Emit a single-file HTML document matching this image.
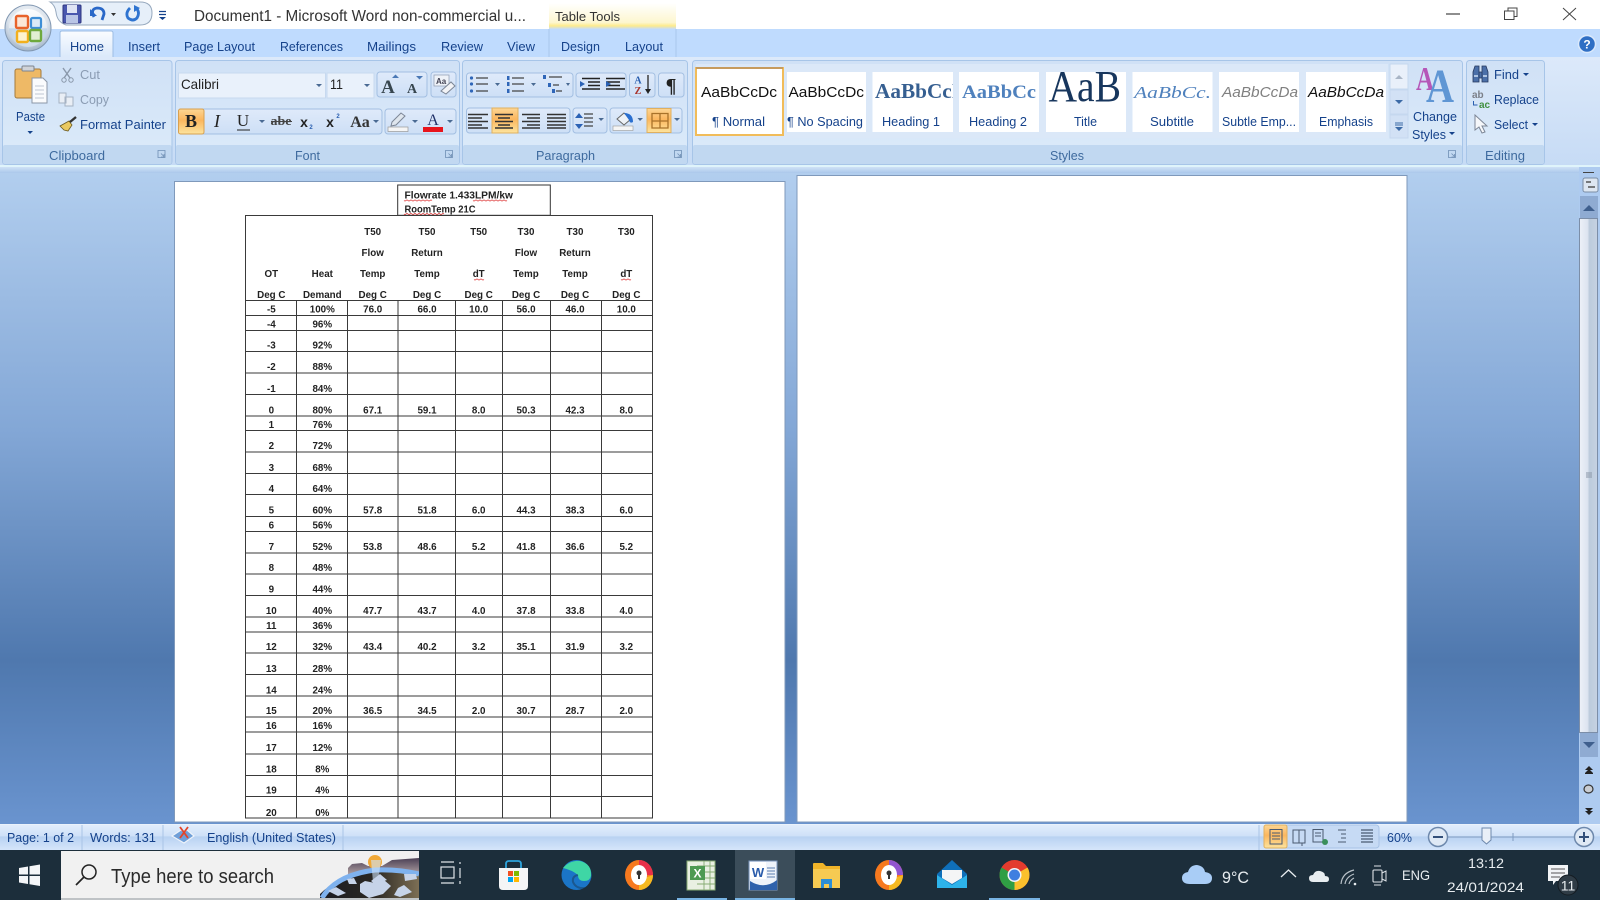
<!DOCTYPE html>
<html lang="en"><head><meta charset="utf-8"><title>Document1 - Microsoft Word</title>
<style>
html,body{margin:0;padding:0;background:#fff;width:1600px;height:900px;overflow:hidden}
svg{display:block;font-family:"Liberation Sans",sans-serif;filter:blur(.35px)}
.t{fill:#15428b;font-size:13px}
.g{fill:#3e6a9e;font-size:13px}
.s{fill:#15428b;font-size:13px}
.tb{font-weight:bold;font-size:9.8px;fill:#222;text-anchor:middle}
.w{fill:#e8edf0}
.sq{fill:none;stroke:#d33;stroke-width:.7}
</style></head><body>
<svg width="1600" height="900" viewBox="0 0 1600 900" xmlns="http://www.w3.org/2000/svg">
<defs>
<linearGradient id="bg" x1="0" y1="167" x2="0" y2="825" gradientUnits="userSpaceOnUse"><stop offset="0" stop-color="#b3cfef"/><stop offset=".4" stop-color="#83a7d6"/><stop offset=".75" stop-color="#4f78ae"/><stop offset="1" stop-color="#6a94cf"/></linearGradient>
<linearGradient id="rib" x1="0" y1="0" x2="0" y2="1"><stop offset="0" stop-color="#dce9fa"/><stop offset="1" stop-color="#c6dbf5"/></linearGradient>
<linearGradient id="grp" x1="0" y1="0" x2="0" y2="1"><stop offset="0" stop-color="#d0e1f6"/><stop offset="1" stop-color="#dcebfa"/></linearGradient>
<linearGradient id="tab" x1="0" y1="0" x2="0" y2="1"><stop offset="0" stop-color="#fafcff"/><stop offset="1" stop-color="#d9e8fa"/></linearGradient>
<linearGradient id="yel" x1="0" y1="0" x2="0" y2="1"><stop offset="0" stop-color="#fff"/><stop offset=".75" stop-color="#fdf6cf"/><stop offset=".88" stop-color="#fdeb8c"/><stop offset="1" stop-color="#c6dcf8"/></linearGradient>
<linearGradient id="act" x1="0" y1="0" x2="0" y2="1"><stop offset="0" stop-color="#fdd694"/><stop offset=".45" stop-color="#fbb65e"/><stop offset="1" stop-color="#fde49e"/></linearGradient>
<linearGradient id="btn" x1="0" y1="0" x2="0" y2="1"><stop offset="0" stop-color="#dfeafa"/><stop offset="1" stop-color="#cddff6"/></linearGradient>
<linearGradient id="st" x1="0" y1="0" x2="0" y2="1"><stop offset="0" stop-color="#e3eefc"/><stop offset=".45" stop-color="#cfe1f8"/><stop offset=".5" stop-color="#b9d2f2"/><stop offset="1" stop-color="#d5e5fa"/></linearGradient>
<linearGradient id="under" x1="0" y1="0" x2="0" y2="1"><stop offset="0" stop-color="#d6e6f8"/><stop offset="1" stop-color="#aac7ea"/></linearGradient>
<linearGradient id="thumb" x1="0" y1="0" x2="1" y2="0"><stop offset="0" stop-color="#edf1f8"/><stop offset=".45" stop-color="#dde4f0"/><stop offset=".55" stop-color="#bccbdc"/><stop offset="1" stop-color="#c6d2e2"/></linearGradient>
<radialGradient id="orb" cx=".5" cy=".35" r=".7"><stop offset="0" stop-color="#fbfcfd"/><stop offset=".6" stop-color="#dbe3ec"/><stop offset="1" stop-color="#93a8c0"/></radialGradient>
<linearGradient id="orbl" x1="0" y1="0" x2="0" y2="1"><stop offset="0" stop-color="#fff" stop-opacity=".9"/><stop offset=".5" stop-color="#eef3f7" stop-opacity=".5"/><stop offset=".52" stop-color="#a9c8e4" stop-opacity=".5"/><stop offset="1" stop-color="#e2ecf4" stop-opacity=".6"/></linearGradient>
<linearGradient id="sky" x1="0" y1="0" x2="0" y2="1"><stop offset="0" stop-color="#4a3f55"/><stop offset="1" stop-color="#b9a9a8"/></linearGradient>
<linearGradient id="arc" x1="0" y1="0" x2="1" y2="0"><stop offset="0" stop-color="#1c1c22"/><stop offset=".55" stop-color="#2a2722"/><stop offset="1" stop-color="#7d6f55"/></linearGradient>
<clipPath id="cH1"><rect x="873" y="72" width="80" height="60"/></clipPath>
<clipPath id="cSearch"><rect x="320" y="851" width="99" height="47"/></clipPath>
</defs>

<!-- title bar -->
<rect width="1600" height="29" fill="#fff"/>
<rect x="0" y="29" width="1600" height="28" fill="#bfdbfe"/>
<rect x="549" y="3" width="127" height="26" fill="url(#yel)"/>
<path d="M549 29V57M676 29V57" stroke="#a9c7ec"/>
<text x="194" y="21" textLength="332" lengthAdjust="spacingAndGlyphs" font-size="15.5" fill="#333">Document1 - Microsoft Word non-commercial u...</text>
<text x="555" y="21" textLength="65" lengthAdjust="spacingAndGlyphs" font-size="13" fill="#333">Table Tools</text>
<!-- window controls -->
<path d="M1446 14H1460" stroke="#444" stroke-width="1.2"/>
<path d="M1504.5 11H1514V19.5H1504.5ZM1508 11V8H1517V16.5H1514" fill="none" stroke="#444" stroke-width="1"/>
<path d="M1563 8L1576 20M1576 8L1563 20" stroke="#444" stroke-width="1"/>

<!-- QAT -->
<path d="M50 2H140Q152 2 152 13Q152 25 140 25H66Q57 22 56 12Q55 5 50 2Z" fill="#e6eff9" stroke="#97a9be"/>
<rect x="63" y="5" width="18" height="18" rx="1" fill="#4957ae" stroke="#2e3680"/>
<rect x="67" y="5" width="10" height="8" fill="#dfe4f4"/><rect x="66" y="15" width="12" height="8" fill="#b9c5e6"/>
<path d="M94 17Q90 9 97 8Q104 8 104 14L102 20" fill="none" stroke="#2a68c8" stroke-width="2.8"/><path d="M90 9V16H97Z" fill="#2a68c8"/>
<path d="M111 13H116L113.500 16Z" fill="#333"/>
<path d="M130 8Q125 13 128 18Q133 22 137 18Q140 13 137 9" fill="none" stroke="#2f74d0" stroke-width="2.8"/><path d="M134 5V12L140 8Z" fill="#2f74d0"/>
<path d="M159 11.500H166M159 14.500H166" stroke="#15428b" stroke-width="1.300"/><path d="M159 17H166L162.500 20Z" fill="#15428b"/>

<!-- office orb -->
<circle cx="28" cy="28" r="23" fill="url(#orb)" stroke="#8298b2"/>
<circle cx="28" cy="28" r="19" fill="url(#orbl)"/>
<rect x="16" y="16" width="12" height="12" rx="1.500" fill="#fbe7d8" stroke="#e8632b" stroke-width="2.400"/>
<rect x="31" y="18" width="10" height="10" rx="1.500" fill="#dbeaf6" stroke="#3f8fd6" stroke-width="2.200"/>
<rect x="17" y="31" width="11" height="11" rx="1.500" fill="#fdf3d0" stroke="#f2b01e" stroke-width="2.400"/>
<rect x="30" y="30" width="11" height="11" rx="1.500" fill="#e2efd4" stroke="#6ea93d" stroke-width="2.400"/>

<!-- tabs -->
<path d="M60 58V33Q60 31 62 31H111Q113 31 113 33V58Z" fill="url(#tab)" stroke="#9dbde4"/>
<text class="t" y="51" x="70" textLength="34" lengthAdjust="spacingAndGlyphs">Home</text>
<text class="t" y="51" x="128" textLength="32" lengthAdjust="spacingAndGlyphs">Insert</text>
<text class="t" y="51" x="184" textLength="71" lengthAdjust="spacingAndGlyphs">Page Layout</text>
<text class="t" y="51" x="280" textLength="63" lengthAdjust="spacingAndGlyphs">References</text>
<text class="t" y="51" x="367" textLength="49" lengthAdjust="spacingAndGlyphs">Mailings</text>
<text class="t" y="51" x="441" textLength="42" lengthAdjust="spacingAndGlyphs">Review</text>
<text class="t" y="51" x="507" textLength="28" lengthAdjust="spacingAndGlyphs">View</text>
<text class="t" y="51" x="561" textLength="39" lengthAdjust="spacingAndGlyphs">Design</text>
<text class="t" y="51" x="625" textLength="38" lengthAdjust="spacingAndGlyphs">Layout</text>
<circle cx="1587" cy="44" r="8.500" fill="#2f6fc4" stroke="#dbe9fb" stroke-width="1.500"/>
<text x="1587" y="48.500" text-anchor="middle" font-size="12" font-weight="bold" fill="#fff">?</text>

<!-- ribbon -->
<rect x="0" y="57" width="1600" height="110" fill="url(#rib)"/>
<rect x="61" y="56" width="51" height="3" fill="#dce9fa"/>
<rect x="0" y="165" width="1600" height="2" fill="#dff4fb"/>
<!-- groups -->
<g fill="url(#grp)" stroke="#a7c5e8">
<rect x="2.500" y="60.500" width="169.500" height="104" rx="3"/>
<rect x="175.500" y="60.500" width="284" height="104" rx="3"/>
<rect x="462.500" y="60.500" width="225" height="104" rx="3"/>
<rect x="692.500" y="60.500" width="770" height="104" rx="3"/>
<rect x="1466.500" y="60.500" width="78" height="104" rx="3"/>
</g>
<g fill="#c1d8f1">
<rect x="3" y="145" width="168.500" height="19" rx="2"/>
<rect x="176" y="145" width="283" height="19" rx="2"/>
<rect x="463" y="145" width="224" height="19" rx="2"/>
<rect x="693" y="145" width="769" height="19" rx="2"/>
<rect x="1467" y="145" width="77" height="19" rx="2"/>
</g>
<text class="g" x="49" y="160" textLength="56" lengthAdjust="spacingAndGlyphs">Clipboard</text>
<text class="g" x="295" y="160" textLength="25" lengthAdjust="spacingAndGlyphs">Font</text>
<text class="g" x="536" y="160" textLength="59" lengthAdjust="spacingAndGlyphs">Paragraph</text>
<text class="g" x="1050" y="160" textLength="34" lengthAdjust="spacingAndGlyphs">Styles</text>
<text class="g" x="1485" y="160" textLength="40" lengthAdjust="spacingAndGlyphs">Editing</text>
<g fill="none" stroke="#6f8fb5" stroke-width=".8">
<path d="M158 150.500h7v7h-7zM161 153.500l3 3M164 154v3h-3"/>
<path d="M445.500 150.500h7v7h-7zM448.500 153.500l3 3M451.500 154v3h-3"/>
<path d="M674.500 150.500h7v7h-7zM677.500 153.500l3 3M680.500 154v3h-3"/>
<path d="M1448.500 150.500h7v7h-7zM1451.500 153.500l3 3M1454.500 154v3h-3"/>
</g>

<!-- Clipboard -->
<rect x="15" y="69" width="26" height="29" rx="2" fill="#eeb966" stroke="#a47a3c"/>
<rect x="22" y="66" width="12" height="5" rx="1" fill="#d0d3d8" stroke="#7d8490"/>
<path d="M32 78H43L47 82V103H32Z" fill="#fafbfd" stroke="#8c97a8"/>
<path d="M35 86H44M35 90H44M35 94H44M35 98H44" stroke="#c0c7d2"/>
<text class="s" x="16" y="121" textLength="29" lengthAdjust="spacingAndGlyphs">Paste</text>
<path d="M27.500 131H33L30 134Z" fill="#15428b"/>
<path d="M63 68L70 78M71 68L64 78" stroke="#8a98aa" stroke-width="1.400"/><circle cx="64" cy="80" r="2.200" fill="none" stroke="#8a98aa"/><circle cx="71" cy="80" r="2.200" fill="none" stroke="#8a98aa"/>
<text x="80" y="79" textLength="20" lengthAdjust="spacingAndGlyphs" font-size="13" fill="#8b9cb3">Cut</text>
<path d="M59 93H66V103H59ZM65 97H73V106H65Z" fill="#e9eef5" stroke="#a5b2c3"/>
<text x="80" y="104" textLength="29" lengthAdjust="spacingAndGlyphs" font-size="13" fill="#8b9cb3">Copy</text>
<path d="M69 121L60 126L64 130L68 131L72 125Z" fill="#e9c961" stroke="#6b5a20" stroke-width=".8"/><path d="M70 122L76 117" stroke="#333" stroke-width="2.400"/>
<text class="s" x="80" y="129" textLength="86" lengthAdjust="spacingAndGlyphs">Format Painter</text>

<!-- Font -->
<rect x="178.500" y="73" width="147" height="25" fill="#e9f1fb" stroke="#c7d9ef"/>
<rect x="327" y="73" width="47" height="25" fill="#e9f1fb" stroke="#c7d9ef"/>
<text x="181" y="89" textLength="38" lengthAdjust="spacingAndGlyphs" font-size="14" fill="#222">Calibri</text>
<text x="330" y="89" textLength="13" lengthAdjust="spacingAndGlyphs" font-size="14" fill="#222">11</text>
<path d="M316 84H322L319 87ZM364 84H370L367 87Z" fill="#4a6a93"/>
<g fill="url(#btn)" stroke="#a3bfe2">
<rect x="377" y="72" width="50" height="25" rx="3"/><rect x="431" y="72" width="25" height="25" rx="3"/>
<rect x="178.500" y="109" width="203.500" height="25" rx="3"/><rect x="385" y="109" width="71" height="25" rx="3"/>
<rect x="466.500" y="73" width="106.500" height="24" rx="3"/><rect x="576" y="73" width="50" height="24" rx="3"/>
<rect x="629.500" y="73" width="25.500" height="24" rx="3"/><rect x="658.500" y="73" width="25.500" height="24" rx="3"/>
<rect x="466.500" y="108" width="103.500" height="25" rx="3"/><rect x="573" y="108" width="34" height="25" rx="3"/>
<rect x="610" y="108" width="72" height="25" rx="3"/>
</g>
<text x="388" y="93" font-family="Liberation Serif" font-size="19" font-weight="bold" fill="#37464f" text-anchor="middle">A</text>
<path d="M392 78h7l-3.500-3.500z" fill="#4a78b5"/>
<text x="412" y="93" font-family="Liberation Serif" font-size="14" font-weight="bold" fill="#37464f" text-anchor="middle">A</text>
<path d="M416 76h7l-3.500 3.500z" fill="#4a78b5"/>
<rect x="434" y="75" width="15" height="11" fill="#eef2f8" stroke="#8d9bb0" stroke-width=".7"/>
<text x="436" y="84" font-size="8" font-weight="bold" fill="#445">Aa</text>
<path d="M441 91L451 82L455 86L446 94Z" fill="#f2f3f6" stroke="#7c8696"/>
<rect x="178.500" y="109" width="25.500" height="25" rx="2" fill="url(#act)" stroke="#d8a050"/>
<text x="191" y="127" text-anchor="middle" font-family="Liberation Serif" font-size="18" font-weight="bold" fill="#222">B</text>
<text x="217" y="127" text-anchor="middle" font-family="Liberation Serif" font-size="18" font-style="italic" fill="#222">I</text>
<text x="243" y="126" text-anchor="middle" font-family="Liberation Serif" font-size="17" fill="#222">U</text>
<path d="M237 130H250" stroke="#222"/>
<path d="M259 120H265L262 123Z" fill="#4a6a93"/>
<text x="281" y="125" text-anchor="middle" font-family="Liberation Serif" font-size="13" font-weight="bold" fill="#444" textLength="21" lengthAdjust="spacingAndGlyphs">abe</text>
<path d="M271 121.500H292" stroke="#444"/>
<text x="304" y="127" text-anchor="middle" font-size="14" font-weight="bold" fill="#222">x</text><text x="311" y="129" text-anchor="middle" font-size="6" font-weight="bold" fill="#2a5fb0">2</text>
<text x="330" y="127" text-anchor="middle" font-size="14" font-weight="bold" fill="#222">x</text><text x="338" y="118" text-anchor="middle" font-size="6" font-weight="bold" fill="#2a5fb0">2</text>
<text x="360" y="127" text-anchor="middle" font-family="Liberation Serif" font-size="16" font-weight="bold" fill="#333">Aa</text>
<path d="M373 120H379L376 123Z" fill="#4a6a93"/>
<path d="M392 122L401 113L405 116L396 125L391 126Z" fill="#dfe6ee" stroke="#7c8696"/>
<rect x="388" y="127" width="20" height="4.500" fill="#f5f5f5" stroke="#999" stroke-width=".7"/>
<path d="M412 120H418L415 123Z" fill="#4a6a93"/>
<text x="433" y="125" text-anchor="middle" font-family="Liberation Serif" font-size="16" fill="#22336a">A</text>
<rect x="423" y="127" width="20" height="5" fill="#e8141c"/>
<path d="M447 120H453L450 123Z" fill="#4a6a93"/>

<!-- Paragraph row 1 -->
<g stroke="#444" stroke-width="1.200" fill="none">
<path d="M476 78H488M476 84H488M476 91H488"/>
<path d="M512 78H524M512 84H524M512 91H524"/>
<path d="M549 77H562M553 85H559M556 91H562"/>
</g>
<g stroke="#222" stroke-width="1.600" fill="none">
<path d="M582 78.500H600M588 82H600M588 85.500H600M582 89H600"/>
<path d="M606 78.500H625M606 82H620M606 85.500H620M606 89H625"/>
</g>
<path d="M648 75V90" stroke="#333" stroke-width="1.400"/>
<path d="M585 84L580 81V87ZM611 84L606 81V87Z" fill="#2b62b5"/>
<g fill="#2f66b8"><circle cx="471.500" cy="78" r="1.600"/><circle cx="471.500" cy="84" r="1.600"/><circle cx="471.500" cy="91" r="1.600"/><rect x="507" y="76" width="2.500" height="4"/><rect x="507" y="82" width="2.500" height="4"/><rect x="507" y="89" width="2.500" height="4"/><rect x="543" y="75" width="3" height="4"/><rect x="548" y="83" width="3" height="4"/><rect x="552" y="89" width="3" height="4"/></g>
<path d="M495 83H500L497.500 86ZM531 83H536L533.500 86ZM566 83H570L568 86Z" fill="#4a6a93"/>
<path d="M645 89H651L648 94Z" fill="#222"/>
<text x="638" y="83.500" text-anchor="middle" font-family="Liberation Serif" font-size="10" font-weight="bold" fill="#2a5fb0">A</text>
<text x="638" y="94" text-anchor="middle" font-family="Liberation Serif" font-size="10" font-weight="bold" fill="#a8342c">Z</text>
<text x="671" y="92" text-anchor="middle" font-family="Liberation Serif" font-size="20" font-weight="bold" fill="#222">¶</text>
<!-- Paragraph row 2 -->
<rect x="492" y="108" width="26" height="25" fill="url(#act)" stroke="#e0b060"/>
<rect x="647" y="108.500" width="24" height="24" fill="url(#act)" stroke="#e0b060"/>
<g stroke="#333" stroke-width="1.500" fill="none">
<path d="M468 114.500H488M468 118H482M468 121.500H488M468 125H482M468 128H488"/>
<path d="M495 114.500H513M498 118H510M495 121.500H513M498 125H510M495 128H513"/>
<path d="M522 114.500H540M527 118H540M522 121.500H540M527 125H540M522 128H540"/>
<path d="M547 114.500H566M547 118H566M547 121.500H566M547 125H566M547 128H566"/>
</g>
<path d="M584 114H593M584 118H593M584 122H593M584 126H593" stroke="#444" stroke-width="1.200"/>
<path d="M579 113L583 118H575ZM579 129L583 124H575Z" fill="#2b62b5"/>
<path d="M598.500 118H604L601 121Z" fill="#4a6a93"/>
<path d="M617 119L624 113L631 119L624 125Z" fill="#eef2f7" stroke="#666"/><path d="M624 113Q633 113 633 122Q630 124 629 120Z" fill="#2a6fd0"/>
<rect x="613" y="126" width="20" height="4.500" fill="#f5f5f5" stroke="#999" stroke-width=".6"/>
<path d="M637.500 118H643L640 121Z" fill="#4a6a93"/>
<path d="M652 113.500H668V128H652ZM660 113.500V128M652 121H668" fill="none" stroke="#a8722a" stroke-width="1.300"/>
<path d="M674 118H680L677 121Z" fill="#4a6a93"/>

<!-- Styles -->
<rect x="696" y="64" width="692" height="74" fill="#dbe8f8"/>
<rect x="696" y="68" width="87" height="67" fill="#fff" stroke="#f1bc5a" stroke-width="2"/>
<path d="M696 68H783" stroke="#b89060" stroke-width="1.500"/>
<g fill="#fff">
<rect x="787" y="72" width="79" height="60"/><rect x="872.500" y="72" width="80.500" height="60"/><rect x="959" y="72" width="80" height="60"/>
<rect x="1046" y="72" width="80" height="60"/><rect x="1132.500" y="72" width="80" height="60"/><rect x="1219" y="72" width="80" height="60"/><rect x="1306" y="72" width="80" height="60"/>
</g>
<text x="701" y="97" textLength="76" lengthAdjust="spacingAndGlyphs" font-size="15" fill="#111">AaBbCcDc</text>
<text x="788.500" y="97" textLength="75.500" lengthAdjust="spacingAndGlyphs" font-size="15" fill="#111">AaBbCcDc</text>
<g clip-path="url(#cH1)"><text x="875" y="98" textLength="85" lengthAdjust="spacingAndGlyphs" font-family="Liberation Serif" font-size="21" font-weight="bold" fill="#365f91">AaBbCcI</text></g>
<text x="962" y="98" textLength="74" lengthAdjust="spacingAndGlyphs" font-family="Liberation Serif" font-size="19" font-weight="bold" fill="#4f81bd">AaBbCc</text>
<text x="1048.500" y="101" textLength="72.500" lengthAdjust="spacingAndGlyphs" font-family="Liberation Serif" font-size="44" fill="#17365d">AaB</text>
<text x="1134" y="98" textLength="77" lengthAdjust="spacingAndGlyphs" font-family="Liberation Serif" font-size="17" font-style="italic" fill="#4f81bd">AaBbCc.</text>
<text x="1222" y="97" textLength="76" lengthAdjust="spacingAndGlyphs" font-size="15" font-style="italic" fill="#808080">AaBbCcDa</text>
<text x="1308" y="97" textLength="76" lengthAdjust="spacingAndGlyphs" font-size="15" font-style="italic" fill="#111">AaBbCcDa</text>
<g font-size="13" fill="#15428b">
<text x="712" y="126" textLength="53" lengthAdjust="spacingAndGlyphs">¶ Normal</text>
<text x="787" y="126" textLength="76" lengthAdjust="spacingAndGlyphs">¶ No Spacing</text>
<text x="882" y="126" textLength="58" lengthAdjust="spacingAndGlyphs">Heading 1</text>
<text x="969" y="126" textLength="58" lengthAdjust="spacingAndGlyphs">Heading 2</text>
<text x="1074" y="126" textLength="23" lengthAdjust="spacingAndGlyphs">Title</text>
<text x="1150" y="126" textLength="44" lengthAdjust="spacingAndGlyphs">Subtitle</text>
<text x="1222" y="126" textLength="74" lengthAdjust="spacingAndGlyphs">Subtle Emp...</text>
<text x="1319" y="126" textLength="54" lengthAdjust="spacingAndGlyphs">Emphasis</text>
</g>
<rect x="1390" y="64" width="18" height="25" fill="#e9f0fa" stroke="#c5d8ef"/>
<rect x="1390" y="90" width="18" height="24" fill="#d2e1f5" stroke="#c5d8ef"/>
<rect x="1390" y="115" width="18" height="23" fill="#d2e1f5" stroke="#c5d8ef"/>
<path d="M1395 79H1403L1399 75Z" fill="#a9b5c6"/><path d="M1395 100H1403L1399 104Z" fill="#3c6aa6"/>
<path d="M1395 123H1403M1395 125H1403" stroke="#3c6aa6"/><path d="M1395 127H1403L1399 131Z" fill="#3c6aa6"/>
<text x="1416" y="90" font-family="Liberation Serif" font-size="34" font-weight="bold" fill="#b556b8" textLength="18" lengthAdjust="spacingAndGlyphs">A</text>
<text x="1426" y="102" font-family="Liberation Serif" font-size="48" font-weight="bold" fill="#5f96d4" textLength="28" lengthAdjust="spacingAndGlyphs">A</text>
<text class="s" x="1413" y="121" textLength="44" lengthAdjust="spacingAndGlyphs">Change</text>
<text class="s" x="1412" y="139" textLength="34" lengthAdjust="spacingAndGlyphs">Styles</text>
<path d="M1449 132H1455L1452 135Z" fill="#15428b"/>

<!-- Editing -->
<path d="M1473 82V72L1475 66H1479V82ZM1482 82V66H1486L1488 72V82ZM1479 72H1482V78H1479Z" fill="#4a6fa8" stroke="#26395e" stroke-width=".8"/>
<path d="M1474 76H1478M1483 76H1487" stroke="#cfe0f5" stroke-width="1.500"/>
<text class="s" x="1494" y="79" textLength="25" lengthAdjust="spacingAndGlyphs">Find</text>
<path d="M1523 73H1529L1526 76Z" fill="#15428b"/>
<text x="1472" y="98" font-size="10" fill="#7b7f88" font-weight="bold">ab</text><text x="1479" y="108" font-size="10" fill="#3f8f3f" font-weight="bold">ac</text>
<path d="M1473.500 101v4h4" stroke="#2a5fb0" fill="none"/>
<text class="s" x="1494" y="104" textLength="45" lengthAdjust="spacingAndGlyphs">Replace</text>
<path d="M1475 115V130L1479 127L1482 133L1485 132L1482 126H1487Z" fill="#f5f7fa" stroke="#7c8696"/>
<text class="s" x="1494" y="129" textLength="34" lengthAdjust="spacingAndGlyphs">Select</text>
<path d="M1532 123H1538L1535 126Z" fill="#15428b"/>

<!-- workspace -->
<rect x="0" y="167" width="1600" height="658" fill="url(#bg)"/>
<rect x="0" y="167" width="1600" height="6" fill="url(#under)" opacity=".8"/>
<rect x="174.500" y="181.500" width="610.500" height="640.500" fill="#fff" stroke="#7f99bb"/>
<rect x="797" y="175.500" width="610" height="646.500" fill="#fff" stroke="#7f99bb"/>

<!-- scrollbar -->
<rect x="1579" y="167" width="21" height="658" fill="#aecbf0"/>
<path d="M1583 172.500H1594" stroke="#444"/>
<rect x="1583" y="178" width="15" height="14" rx="2" fill="#dde6f1" stroke="#7c8ea5"/><path d="M1586 182h5M1588 187h7" stroke="#555" stroke-width="1.400"/>
<rect x="1580" y="196" width="18" height="22" fill="#8fabd2"/>
<path d="M1583 211H1595L1589 205Z" fill="#3f5f8d"/>
<rect x="1579.500" y="218.500" width="18" height="514" fill="url(#thumb)" stroke="#7c8ea8"/>
<path d="M1586 473h6M1586 475h6M1586 477h6" stroke="#8a96a6"/>
<rect x="1580" y="733" width="18" height="24" fill="#8fabd2"/>
<path d="M1583 742H1595L1589 748Z" fill="#3f5f8d"/>
<path d="M1585 770L1589 766L1593 770ZM1585 773L1589 769L1593 773ZM1585 773H1593V774H1585Z" fill="#222"/>
<ellipse cx="1588.500" cy="789" rx="4.500" ry="4" fill="#c8ccd2" stroke="#333" stroke-width="1.200"/>
<path d="M1585 808L1589 812L1593 808ZM1585 811L1589 815L1593 811Z" fill="#222"/>

<!-- Page content -->
<rect x="397.700" y="185" width="152.600" height="30.300" fill="#fff" stroke="#333"/>
<text x="404.500" y="198.500" font-size="10" font-weight="bold" fill="#222" textLength="108.500" lengthAdjust="spacingAndGlyphs">Flowrate 1.433LPM/kw</text>
<text x="404.500" y="212.500" font-size="10" font-weight="bold" fill="#222" textLength="71" lengthAdjust="spacingAndGlyphs">RoomTemp 21C</text>
<path class="sq" d="M404 200.500q1 1 2 0t2 0 2 0 2 0 2 0 2 0 2 0 2 0 2 0 2 0 2 0 2 0 2 0 2 0M473 200.500q1 1 2 0t2 0 2 0 2 0 2 0 2 0 2 0 2 0 2 0 2 0 2 0 2 0 2 0 2 0 2 0 2 0 2 0M404 214q1 1 2 0t2 0 2 0 2 0 2 0 2 0 2 0 2 0 2 0 2 0 2 0 2 0 2 0 2 0 2 0 2 0 2 0 2 0 2 0 2 0M474 279.500q1 1 2 0t2 0 2 0 2 0 2 0M621 279.500q1 1 2 0t2 0 2 0 2 0 2 0"/>
<!-- table grid -->
<g stroke="#3a3a3a" stroke-width="1.100" fill="none" shape-rendering="crispEdges">
<rect x="245.500" y="215.500" width="407" height="602.500"/>
<path d="M245 300.500H652M245 315.500H652M245 330.500H652M245 351.500H652M245 373H652M245 394.500H652M245 416H652M245 430.500H652M245 452H652M245 473.500H652M245 494.500H652M245 516.500H652M245 531.500H652M245 553H652M245 574H652M245 595.500H652M245 617H652M245 632H652M245 653H652M245 674.500H652M245 696H652M245 717H652M245 732H652M245 754H652M245 775.500H652M245 796.500H652"/>
<path d="M296.500 300V818M347.500 300V818M398 300V818M455.500 300V818M502.500 300V818M550.500 300V818M601.500 300V818"/>
</g>
<!-- header -->
<g>
<text class="tb" x="372.700" y="235">T50</text><text class="tb" x="427" y="235">T50</text><text class="tb" x="478.700" y="235">T50</text><text class="tb" x="526" y="235">T30</text><text class="tb" x="575" y="235">T30</text><text class="tb" x="626.300" y="235">T30</text>
<text class="tb" x="372.700" y="256">Flow</text><text class="tb" x="427" y="256">Return</text><text class="tb" x="526" y="256">Flow</text><text class="tb" x="575" y="256">Return</text>
<text class="tb" x="271.300" y="277">OT</text><text class="tb" x="322.300" y="277">Heat</text><text class="tb" x="372.700" y="277">Temp</text><text class="tb" x="427" y="277">Temp</text><text class="tb" x="478.700" y="277">dT</text><text class="tb" x="526" y="277">Temp</text><text class="tb" x="575" y="277">Temp</text><text class="tb" x="626.300" y="277">dT</text>
<text class="tb" x="271.300" y="298">Deg C</text><text class="tb" x="322.300" y="298">Demand</text><text class="tb" x="372.700" y="298">Deg C</text><text class="tb" x="427" y="298">Deg C</text><text class="tb" x="478.700" y="298">Deg C</text><text class="tb" x="526" y="298">Deg C</text><text class="tb" x="575" y="298">Deg C</text><text class="tb" x="626.300" y="298">Deg C</text>
</g>
<!-- rows -->
<text class="tb" x="271.300" y="312.500">-5</text><text class="tb" x="322.300" y="312.500">100%</text><text class="tb" x="372.700" y="312.500">76.0</text><text class="tb" x="427" y="312.500">66.0</text><text class="tb" x="478.700" y="312.500">10.0</text><text class="tb" x="526" y="312.500">56.0</text><text class="tb" x="575" y="312.500">46.0</text><text class="tb" x="626.300" y="312.500">10.0</text>
<text class="tb" x="271.300" y="327.500">-4</text><text class="tb" x="322.300" y="327.500">96%</text>
<text class="tb" x="271.300" y="348.500">-3</text><text class="tb" x="322.300" y="348.500">92%</text>
<text class="tb" x="271.300" y="370">-2</text><text class="tb" x="322.300" y="370">88%</text>
<text class="tb" x="271.300" y="392">-1</text><text class="tb" x="322.300" y="392">84%</text>
<text class="tb" x="271.300" y="413.500">0</text><text class="tb" x="322.300" y="413.500">80%</text><text class="tb" x="372.700" y="413.500">67.1</text><text class="tb" x="427" y="413.500">59.1</text><text class="tb" x="478.700" y="413.500">8.0</text><text class="tb" x="526" y="413.500">50.3</text><text class="tb" x="575" y="413.500">42.3</text><text class="tb" x="626.300" y="413.500">8.0</text>
<text class="tb" x="271.300" y="428">1</text><text class="tb" x="322.300" y="428">76%</text>
<text class="tb" x="271.300" y="449">2</text><text class="tb" x="322.300" y="449">72%</text>
<text class="tb" x="271.300" y="471">3</text><text class="tb" x="322.300" y="471">68%</text>
<text class="tb" x="271.300" y="492">4</text><text class="tb" x="322.300" y="492">64%</text>
<text class="tb" x="271.300" y="513.500">5</text><text class="tb" x="322.300" y="513.500">60%</text><text class="tb" x="372.700" y="513.500">57.8</text><text class="tb" x="427" y="513.500">51.8</text><text class="tb" x="478.700" y="513.500">6.0</text><text class="tb" x="526" y="513.500">44.3</text><text class="tb" x="575" y="513.500">38.3</text><text class="tb" x="626.300" y="513.500">6.0</text>
<text class="tb" x="271.300" y="528.500">6</text><text class="tb" x="322.300" y="528.500">56%</text>
<text class="tb" x="271.300" y="550">7</text><text class="tb" x="322.300" y="550">52%</text><text class="tb" x="372.700" y="550">53.8</text><text class="tb" x="427" y="550">48.6</text><text class="tb" x="478.700" y="550">5.2</text><text class="tb" x="526" y="550">41.8</text><text class="tb" x="575" y="550">36.6</text><text class="tb" x="626.300" y="550">5.2</text>
<text class="tb" x="271.300" y="571">8</text><text class="tb" x="322.300" y="571">48%</text>
<text class="tb" x="271.300" y="592.500">9</text><text class="tb" x="322.300" y="592.500">44%</text>
<text class="tb" x="271.300" y="614">10</text><text class="tb" x="322.300" y="614">40%</text><text class="tb" x="372.700" y="614">47.7</text><text class="tb" x="427" y="614">43.7</text><text class="tb" x="478.700" y="614">4.0</text><text class="tb" x="526" y="614">37.8</text><text class="tb" x="575" y="614">33.8</text><text class="tb" x="626.300" y="614">4.0</text>
<text class="tb" x="271.300" y="629">11</text><text class="tb" x="322.300" y="629">36%</text>
<text class="tb" x="271.300" y="650">12</text><text class="tb" x="322.300" y="650">32%</text><text class="tb" x="372.700" y="650">43.4</text><text class="tb" x="427" y="650">40.2</text><text class="tb" x="478.700" y="650">3.2</text><text class="tb" x="526" y="650">35.1</text><text class="tb" x="575" y="650">31.9</text><text class="tb" x="626.300" y="650">3.2</text>
<text class="tb" x="271.300" y="672">13</text><text class="tb" x="322.300" y="672">28%</text>
<text class="tb" x="271.300" y="693.500">14</text><text class="tb" x="322.300" y="693.500">24%</text>
<text class="tb" x="271.300" y="714">15</text><text class="tb" x="322.300" y="714">20%</text><text class="tb" x="372.700" y="714">36.5</text><text class="tb" x="427" y="714">34.5</text><text class="tb" x="478.700" y="714">2.0</text><text class="tb" x="526" y="714">30.7</text><text class="tb" x="575" y="714">28.7</text><text class="tb" x="626.300" y="714">2.0</text>
<text class="tb" x="271.300" y="729">16</text><text class="tb" x="322.300" y="729">16%</text>
<text class="tb" x="271.300" y="751">17</text><text class="tb" x="322.300" y="751">12%</text>
<text class="tb" x="271.300" y="772.500">18</text><text class="tb" x="322.300" y="772.500">8%</text>
<text class="tb" x="271.300" y="793.500">19</text><text class="tb" x="322.300" y="793.500">4%</text>
<text class="tb" x="271.300" y="816">20</text><text class="tb" x="322.300" y="816">0%</text>

<!-- status bar -->
<rect x="0" y="824" width="1600" height="26" fill="url(#st)"/>
<path d="M0 824.500H1600" stroke="#eaf2fb"/>
<path d="M82 825V850M163 825V850M343 825V850M1259 825V850" stroke="#a9c4e6"/>
<text class="s" x="7" y="842" textLength="67" lengthAdjust="spacingAndGlyphs">Page: 1 of 2</text>
<text class="s" x="90" y="842" textLength="66" lengthAdjust="spacingAndGlyphs">Words: 131</text>
<path d="M172 836L181 830L184 832L187 830L194 836L184 843Z" fill="#6f9fd8" stroke="#eef3fa" stroke-width="1.200"/>
<path d="M180 827L188 838M188 827L180 838" stroke="#e2452a" stroke-width="1.800"/>
<text class="s" x="207" y="842" textLength="129" lengthAdjust="spacingAndGlyphs">English (United States)</text>
<rect x="1264" y="825" width="115" height="23" rx="3" fill="#c6daf4" stroke="#a8c3e6"/>
<rect x="1264" y="825" width="23" height="23" rx="2" fill="url(#act)" stroke="#e0b060"/>
<g fill="none" stroke="#4a5a70" stroke-width="1">
<path d="M1270 829.500H1282V844H1270ZM1272 833H1280M1272 836H1280M1272 839H1280"/>
<path d="M1293 830H1299V843H1293ZM1299 830H1305V843H1299ZM1302 843V846"/>
<path d="M1313 829.500H1323V842H1313ZM1315 833H1321M1315 836H1321"/>
<path d="M1338 830H1346M1341 834H1346M1341 838H1346M1338 842H1346"/>
<path d="M1361 830H1373M1361 833H1373M1361 836H1373M1361 839H1373M1361 842H1373" stroke-width="1.300"/>
</g>
<circle cx="1325" cy="842" r="3" fill="#3a8f5a"/>
<text class="s" x="1387" y="842" textLength="25" lengthAdjust="spacingAndGlyphs">60%</text>
<path d="M1448 837H1575" stroke="#7f9bc0"/>
<path d="M1513 833V841" stroke="#7f9bc0"/>
<circle cx="1438" cy="837" r="9.500" fill="#dfe9f5" stroke="#6d88ac" stroke-width="1.500"/><path d="M1433 837H1443" stroke="#33507a" stroke-width="2"/>
<path d="M1482 828H1491V840L1486.500 844L1482 840Z" fill="#e9eff7" stroke="#6d88ac"/>
<circle cx="1584" cy="837" r="9.500" fill="#dfe9f5" stroke="#6d88ac" stroke-width="1.500"/><path d="M1579 837H1589M1584 832V842" stroke="#33507a" stroke-width="2"/>

<!-- taskbar -->
<rect x="0" y="850" width="1600" height="50" fill="#1c2e3b"/>
<path d="M19 868L28 866.500V874.500H19ZM29.500 866.200L40 864.500V874.500H29.500ZM19 876H28V884L19 882.500ZM29.500 876H40V886L29.500 884.300Z" fill="#f4f6f8"/>
<rect x="61" y="851" width="358" height="47" fill="#f1f1f1"/>
<rect x="61" y="898" width="358" height="2" fill="#bfc3c6"/>
<circle cx="89" cy="872" r="7" fill="none" stroke="#222" stroke-width="1.500"/><path d="M84 877L76 885" stroke="#222" stroke-width="1.700"/>
<text x="111" y="883" textLength="163" lengthAdjust="spacingAndGlyphs" font-size="20" fill="#2a2a2a">Type here to search</text>
<g clip-path="url(#cSearch)">
<rect x="320" y="851" width="99" height="47" fill="#f0f0f0"/>
<path d="M348 868L352 864L362 863L368 866H382L392 860L419 858V876H348Z" fill="url(#sky)"/>
<circle cx="375" cy="862" r="7" fill="#f0a835"/>
<path d="M320 898V894Q340 874 375 872Q400 871 419 875V898Z" fill="url(#arc)"/>
<path d="M322 898Q336 875 375 870Q398 869 419 874" fill="none" stroke="#7fb2ee" stroke-width="5"/>
<path d="M371 860H381L378 882H373Z" fill="#cfe4fb" opacity=".6"/>
<path d="M371 881l9-7 7 6-12 4zM404 874l12 0 1 5-12 2zM347 879l7-1 3 6-8 0zM328 891l8-4 10 6-8 3zM360 884l5-3 10 2 9-3 7 6-8 8-14 4-9-6zM398 888l6-3 8 7-12 5-6-2z" fill="#c6d3e8"/>
</g>
<!-- task view -->
<g fill="none" stroke="#dfe4e8" stroke-width="1.200"><rect x="441" y="867" width="13" height="11"/><path d="M441 862H454M441 883H454M460 862V864M460 868V878M460 881V884"/></g>
<!-- store -->
<path d="M499 868H528V886Q528 890 524 890H503Q499 890 499 886Z" fill="#f4f5f6"/>
<path d="M506 868V864Q506 861 509 861H518Q521 861 521 864V868" fill="none" stroke="#2fa4dd" stroke-width="1.800"/>
<rect x="508" y="871" width="5" height="5" fill="#f25022"/><rect x="514" y="871" width="5" height="5" fill="#7fba00"/><rect x="508" y="877" width="5" height="5" fill="#00a4ef"/><rect x="514" y="877" width="5" height="5" fill="#ffb900"/>
<!-- edge -->
<circle cx="576.500" cy="875" r="15" fill="#1b75c7"/>
<path d="M563 868Q570 860 580 861Q592 864 591 876Q590 881 584 881Q578 881 578 875Q572 870 563 868Z" fill="#3fd6a5"/>
<path d="M578 875Q572 876 573 882Q576 889 585 888" fill="none" stroke="#1c2e3b" stroke-width="2" opacity=".4"/>
<!-- secure browsers -->
<g>
<ellipse cx="639" cy="875" rx="14" ry="15" fill="#f7791e"/>
<path d="M639 860A14 15 0 0 1 653 875L639 875Z" fill="#e8304a"/>
<path d="M653 875A14 15 0 0 1 639 890L639 880Z" fill="#f5b921"/>
<ellipse cx="639" cy="875" rx="8" ry="10" fill="#fff"/>
<circle cx="639" cy="873" r="2.500" fill="#333"/><rect x="638" y="874" width="2" height="5" fill="#333"/>
</g>
<g>
<ellipse cx="889" cy="875" rx="14" ry="15" fill="#f7791e"/>
<path d="M889 860A14 15 0 0 1 903 875L889 875Z" fill="#9255d0"/>
<path d="M903 875A14 15 0 0 1 889 890L889 880Z" fill="#f5b921"/>
<ellipse cx="889" cy="875" rx="8" ry="10" fill="#fff"/>
<circle cx="889" cy="873" r="2.500" fill="#333"/><rect x="888" y="874" width="2" height="5" fill="#333"/>
</g>
<!-- excel -->
<rect x="687" y="861" width="28" height="29" fill="#e9f0e2" stroke="#86ab72"/>
<path d="M697 866H715M697 872H715M697 878H715M697 884H715M704 861V890M710 861V890" stroke="#86ab72" stroke-width=".9"/>
<rect x="690" y="866" width="15" height="14" fill="#4e9a52"/><text x="697.500" y="877.500" text-anchor="middle" font-size="12" font-weight="bold" fill="#fff">X</text>
<rect x="677" y="898" width="50" height="2" fill="#78b4e4"/>
<!-- word -->
<rect x="735" y="850" width="60" height="50" fill="#3b4d5a"/>
<rect x="735" y="898" width="60" height="2" fill="#78b4e4"/>
<rect x="749" y="861" width="28" height="29" fill="#eef3fa" stroke="#7b96bd"/>
<rect x="750" y="862" width="16" height="17" fill="#fff"/>
<path d="M750 881Q764 890 777 880V890H750Z" fill="#2f62ac"/>
<text x="758" y="877" text-anchor="middle" font-size="13" font-weight="bold" fill="#2a5cab">W</text>
<path d="M767 868H775M767 871H775M767 874H775M767 877H775" stroke="#5a7db0"/>
<!-- folder -->
<path d="M813 864Q813 863 814 863H823L826 866H840V888H813Z" fill="#f0b429"/>
<rect x="813" y="869" width="27" height="19" fill="#f6ca52"/>
<rect x="821" y="879" width="11" height="9" fill="#2c8ed6"/><rect x="824" y="884" width="5" height="4" fill="#f6ca52"/>
<!-- mail -->
<path d="M937 874L952 860L967 874V888H937Z" fill="#0f6fb9"/>
<path d="M942 870H962V878L952 884L942 878Z" fill="#f4f5f6"/>
<path d="M937 875L952 885L967 875V888H937Z" fill="#2db3ea"/>
<!-- chrome -->
<circle cx="1014.500" cy="875" r="15" fill="#e33b2e"/>
<path d="M1014.500 890A15 15 0 0 1 1001.500 867.500L1014.500 875Z" fill="#2f9e44"/>
<path d="M1014.500 890A15 15 0 0 0 1029.500 875Q1029.500 871 1027.500 867.500L1014.500 875Z" fill="#fbc02d"/>
<circle cx="1014.500" cy="875" r="7" fill="#f2f5f8"/><circle cx="1014.500" cy="875" r="5.500" fill="#3f7fe0"/>
<rect x="989" y="898" width="51" height="2" fill="#78b4e4"/>
<!-- tray -->
<path d="M1190 884Q1182 884 1182 878Q1182 873 1188 872Q1190 865 1197 865Q1204 866 1205 872Q1212 873 1212 878Q1212 884 1205 884Z" fill="#a9cdf6"/>
<text x="1222" y="883" textLength="27" lengthAdjust="spacingAndGlyphs" font-size="17" class="w">9°C</text>
<path d="M1281 877L1288.500 870L1296 877" fill="none" stroke="#e8edf0" stroke-width="1.300"/>
<path d="M1313 882Q1309 882 1309 878Q1309 875 1313 875Q1315 870 1320 871Q1325 872 1325 876Q1329 876 1329 879Q1329 882 1326 882Z" fill="#e8edf0"/>
<path d="M1341 884Q1342 873 1354 870M1345 884Q1346 877 1354 874M1349 884Q1350 880 1354 878" fill="none" stroke="#b9c2c9" stroke-width="1.200"/><circle cx="1355" cy="884" r="1.300" fill="#e8edf0"/>
<rect x="1373" y="870" width="9" height="12" rx="1" fill="none" stroke="#dfe4e8" stroke-width="1.100"/><path d="M1382 873L1386 871V881L1382 879M1374 866H1381M1374 885H1381" fill="none" stroke="#dfe4e8" stroke-width="1"/>
<text x="1402" y="880" textLength="28" lengthAdjust="spacingAndGlyphs" font-size="14" class="w">ENG</text>
<text x="1468" y="868" textLength="36" lengthAdjust="spacingAndGlyphs" font-size="14" class="w">13:12</text>
<text x="1447" y="892" textLength="77" lengthAdjust="spacingAndGlyphs" font-size="14" class="w">24/01/2024</text>
<path d="M1548 865H1568V881H1556L1553 885V881H1548Z" fill="#f2f4f6"/>
<path d="M1551 869H1565M1551 873H1565M1551 877H1560" stroke="#555" stroke-width="1"/>
<circle cx="1568" cy="885" r="10" fill="#2f3c46" stroke="#141c22" stroke-width="1"/>
<text x="1568" y="890.500" text-anchor="middle" font-size="14" fill="#e8edf0">11</text>
</svg>
</body></html>
